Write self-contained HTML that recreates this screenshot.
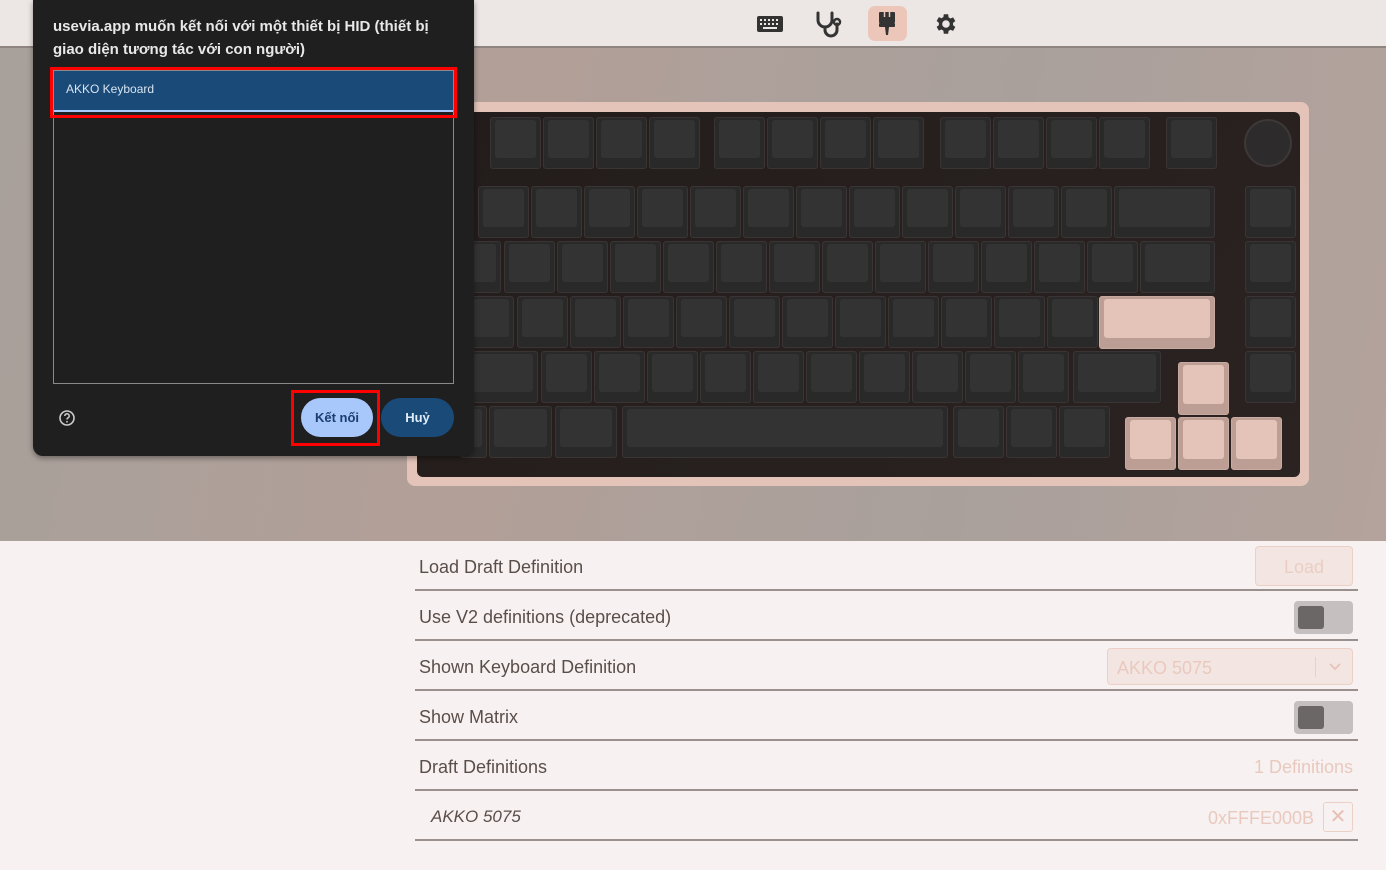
<!DOCTYPE html>
<html><head><meta charset="utf-8"><style>
*{margin:0;padding:0;box-sizing:border-box}
body{width:1386px;height:870px;overflow:hidden;position:relative;background:#f7f2f1;font-family:"Liberation Sans","Noto Sans CJK SC",sans-serif}
.top{position:absolute;left:0;top:0;width:1386px;height:48px;background:#ece6e4;border-bottom:2px solid #8e8480}
.stage{position:absolute;left:0;top:48px;width:1386px;height:493px;background:linear-gradient(100deg,#a8a09b 0%,#b29f98 35%,#a9a09c 70%,#b4a29c 100%)}
.frame{position:absolute;left:407px;top:102px;width:902px;height:384px;background:#e4c4b8;border-radius:8px}
.plate{position:absolute;left:417px;top:112px;width:883px;height:365px;background:linear-gradient(135deg,#221c1b,#2b2321);border-radius:6px}
.k{position:absolute;height:52px;background:#2a2929;border-radius:3px;border:1px solid #3a3534}
.k::after{content:"";position:absolute;left:4px;right:4px;top:2px;bottom:10px;background:#343333;border-radius:3px}
.p{background:#bc9e94;border-color:#c9aaa0}
.p::after{background:#e4c4b8}
.knob{position:absolute;left:1244px;top:119px;width:48px;height:48px;border-radius:50%;background:#2d2b2b;border:2px solid #3c3837}
.dlg{position:absolute;left:33px;top:0;width:441px;height:456px;background:#1f1f1f;border-radius:0 0 10px 10px;box-shadow:0 2px 6px rgba(0,0,0,.4)}
.ttl{position:absolute;left:53px;top:15px;width:400px;color:#e8e8e8;font-size:15px;font-weight:bold;line-height:23px}
.list{position:absolute;left:53px;top:70px;width:401px;height:314px;border:1px solid #8a8a8a}
.sel{position:absolute;left:54px;top:71px;width:399px;height:41px;background:#1a4a78;color:#d8e4f0;font-size:12px;padding:11px 12px;border-bottom:2px solid #a8c7fa}
.red{position:absolute;border:3px solid #ff0000}
.btn{position:absolute;top:398px;height:39px;border-radius:20px;font-size:13px;font-weight:bold;text-align:center;line-height:39px}
.row{position:absolute;left:415px;width:943px;height:50px;border-bottom:2px solid #9a908d}
.row span.l{position:absolute;left:4px;top:16px;font-size:18px;color:#5a4e4a}
.tog{position:absolute;right:5px;top:10px;width:59px;height:33px;background:#c5c0bf;border-radius:4px}
.tog::after{content:"";position:absolute;left:4px;top:5px;width:26px;height:23px;background:#6b6766;border-radius:3px}
.r{color:#e9c9be}
</style></head><body>
<div class="top"></div>
<svg style="position:absolute;left:755px;top:12px" width="30" height="24" viewBox="0 0 30 24"><rect x="2" y="4" width="26" height="16" rx="2" fill="#333"/><g fill="#ece6e4"><rect x="5" y="7" width="2" height="2"/><rect x="9" y="7" width="2" height="2"/><rect x="13" y="7" width="2" height="2"/><rect x="17" y="7" width="2" height="2"/><rect x="21" y="7" width="2" height="2"/><rect x="5" y="11" width="2" height="2"/><rect x="9" y="11" width="2" height="2"/><rect x="13" y="11" width="2" height="2"/><rect x="17" y="11" width="2" height="2"/><rect x="21" y="11" width="2" height="2"/><rect x="8" y="15" width="14" height="2"/></g></svg>
<svg style="position:absolute;left:814px;top:10px" width="30" height="28" viewBox="0 0 30 28"><path d="M4 3v7a7 7 0 0 0 14 0V3M11 17v3a6 6 0 0 0 12 0v-6" fill="none" stroke="#333" stroke-width="3" stroke-linecap="round"/><circle cx="23" cy="12" r="3" fill="none" stroke="#333" stroke-width="2.5"/></svg>
<div style="position:absolute;left:868px;top:6px;width:39px;height:35px;background:#ecc6b8;border-radius:7px"></div>
<svg style="position:absolute;left:876px;top:9px" width="22" height="30" viewBox="0 0 22 30"><rect x="3" y="3" width="16" height="11" rx="1" fill="#333"/><rect x="3" y="14" width="16" height="4" rx="1" fill="#333"/><path d="M9 18h4l-1 8h-2z" fill="#333"/><g stroke="#ecc6b8" stroke-width="1.5"><line x1="8.5" y1="3" x2="8.5" y2="8"/><line x1="13.5" y1="3" x2="13.5" y2="8"/></g></svg>
<svg style="position:absolute;left:932px;top:11px" width="26" height="26" viewBox="0 0 24 24"><path fill="#333" d="M19.4 13a7.5 7.5 0 0 0 0-2l2.1-1.6-2-3.5-2.5 1a7 7 0 0 0-1.7-1L14.9 3h-4l-.4 2.7a7 7 0 0 0-1.7 1l-2.5-1-2 3.5L6.4 11a7.5 7.5 0 0 0 0 2l-2.1 1.6 2 3.5 2.5-1a7 7 0 0 0 1.7 1l.4 2.9h4l.4-2.7a7 7 0 0 0 1.7-1l2.5 1 2-3.5zM12.9 15.5a3.5 3.5 0 1 1 0-7 3.5 3.5 0 0 1 0 7z"/></svg>
<div class="stage"></div>
<div class="frame"></div>
<div class="plate"></div>
<div id="kb"></div>
<div class="knob"></div>
<script>
var h='';function k(x,y,w,p){h+='<div class="k'+(p?' p':'')+'" style="left:'+x+'px;top:'+y+'px;width:'+w+'px'+(p?';height:53px':'')+'"></div>'}
[490,543,596,649,714,767,820,873,940,993,1046,1099,1166].forEach(function(x){k(x,117,51)});
for(var i=0;i<12;i++)k(478+53*i,186,51);k(1114,186,101);
k(460,241,41);for(i=0;i<12;i++)k(504+53*i,241,51);k(1140,241,75);
k(460,296,54);for(i=0;i<11;i++)k(517+53*i,296,51);k(1099,296,116,1);
k(460,351,78);for(i=0;i<10;i++)k(541+53*i,351,51);k(1073,351,88);
k(460,406,27);k(489,406,63);k(555,406,62);k(622,406,326);k(953,406,51);k(1006,406,51);k(1059,406,51);
[186,241,296,351].forEach(function(y){k(1245,y,51)});
k(1178,362,51,1);k(1125,417,51,1);k(1178,417,51,1);k(1231,417,51,1);
document.getElementById('kb').innerHTML=h;
</script>
<div class="dlg"></div>
<div class="ttl">usevia.app muốn kết nối với một thiết bị HID (thiết bị giao diện tương tác với con người)</div>
<div class="list"></div>
<div class="sel">AKKO Keyboard</div>
<div class="red" style="left:50px;top:67px;width:407px;height:51px"></div>
<svg style="position:absolute;left:58px;top:409px" width="18" height="18" viewBox="0 0 18 18"><circle cx="9" cy="9" r="7" fill="none" stroke="#ccc" stroke-width="1.6"/><path d="M6.8 7a2.2 2.2 0 1 1 3 2c-.7.3-.8.8-.8 1.5" fill="none" stroke="#ccc" stroke-width="1.5"/><circle cx="9" cy="12.8" r=".9" fill="#ccc"/></svg>
<div class="btn" style="left:301px;width:72px;background:#a8c7fa;color:#1a3e6e">Kết nối</div>
<div class="btn" style="left:381px;width:73px;background:#1a4a78;color:#e0ecf8">Huỷ</div>
<div class="red" style="left:291px;top:390px;width:89px;height:56px"></div>

<div class="row" style="top:541px"><span class="l">Load Draft Definition</span><div style="position:absolute;right:5px;top:5px;width:98px;height:40px;border:1px solid #ecd0c6;background:#f3e6e2;border-radius:4px;color:#ebcdc3;font-size:18px;text-align:center;line-height:40px">Load</div></div>
<div class="row" style="top:591px"><span class="l">Use V2 definitions (deprecated)</span><div class="tog"></div></div>
<div class="row" style="top:641px"><span class="l">Shown Keyboard Definition</span><div style="position:absolute;right:5px;top:7px;width:246px;height:37px;border:1px solid #ecd0c6;background:#f3e6e2;border-radius:4px"><span class="r" style="position:absolute;left:9px;top:9px;font-size:18px">AKKO 5075</span><div style="position:absolute;right:36px;top:8px;width:1px;height:20px;background:#ecd0c6"></div><svg style="position:absolute;right:11px;top:14px" width="12" height="8"><path d="M1 1l5 5 5-5" fill="none" stroke="#e6c6bb" stroke-width="2"/></svg></div></div>
<div class="row" style="top:691px"><span class="l">Show Matrix</span><div class="tog"></div></div>
<div class="row" style="top:741px"><span class="l">Draft Definitions</span><span class="r" style="position:absolute;right:5px;top:16px;font-size:18px">1 Definitions</span></div>
<div class="row" style="top:791px"><span class="l" style="left:16px;font-style:italic;font-size:17px">AKKO 5075</span><span class="r" style="position:absolute;right:44px;top:17px;font-size:18px">0xFFFE000B</span><div style="position:absolute;right:5px;top:11px;width:30px;height:30px;border:1px solid #ecd0c6;border-radius:3px;color:#e6c0b4;font-size:20px;text-align:center;line-height:28px">✕</div></div>
</body></html>
